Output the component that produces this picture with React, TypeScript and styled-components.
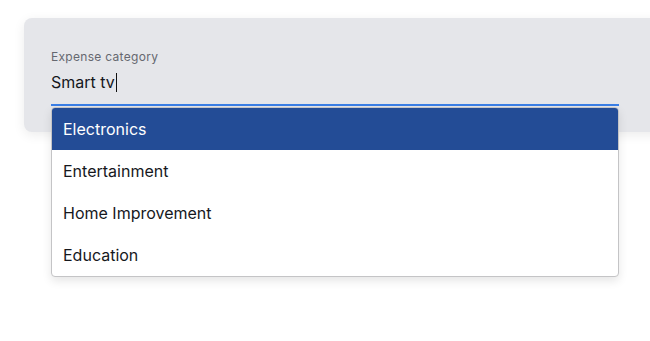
import React from 'react';
import styled, { createGlobalStyle } from 'styled-components';

const GlobalStyle = createGlobalStyle`
  body {
    margin: 0;
    background: #ffffff;
    font-family: Inter, "Noto Sans", sans-serif;
  }
`;

const Page = styled.div`
  width: 650px;
  height: 341px;
  overflow: hidden;
  padding: 18px 0 0 24px;
  box-sizing: border-box;
`;

const Card = styled.div`
  width: 660px;
  height: 114px;
  box-sizing: border-box;
  padding: 31px 27px 0;
  background: #e5e6ea;
  border-radius: 8px;
  box-shadow: 0 3px 12px rgba(0, 0, 0, 0.08);
`;

const Field = styled.div`
  position: relative;
  width: 568px;
  display: flex;
  flex-direction: column;
  gap: 5px;
  padding-bottom: 10px;
  border-bottom: 2px solid #3b7fe6;
`;

const Label = styled.label`
  font-size: 12px;
  line-height: 16px;
  letter-spacing: 0.3px;
  color: #666870;
`;

const Value = styled.div`
  font-size: 16px;
  line-height: 24px;
  color: #15171c;
  display: flex;
  align-items: center;
`;

const Caret = styled.span`
  display: inline-block;
  width: 1px;
  height: 19px;
  margin-left: 1px;
  background: #111;
`;

const Menu = styled.ul`
  position: absolute;
  left: 0;
  right: 0;
  top: calc(100% + 3px);
  margin: 0;
  padding: 0;
  list-style: none;
  background: #ffffff;
  border: 1px solid #c4c4c6;
  border-radius: 4px;
  box-shadow: 0 4px 10px rgba(0, 0, 0, 0.1);
  overflow: hidden;
`;

const Option = styled.li<{ $active?: boolean }>`
  height: 42px;
  display: flex;
  align-items: center;
  padding-left: 11px;
  font-size: 16px;
  color: ${(p) => (p.$active ? '#ffffff' : '#16181d')};
  background: ${(p) => (p.$active ? '#234c96' : 'transparent')};
`;

const options = ['Electronics', 'Entertainment', 'Home Improvement', 'Education'];

export default function App() {
  return (
    <>
      <GlobalStyle />
      <Page>
        <Card>
          <Field>
            <Label>Expense category</Label>
            <Value>
              Smart tv
              <Caret />
            </Value>
            <Menu>
              {options.map((o, i) => (
                <Option key={o} $active={i === 0}>
                  {o}
                </Option>
              ))}
            </Menu>
          </Field>
        </Card>
      </Page>
    </>
  );
}
